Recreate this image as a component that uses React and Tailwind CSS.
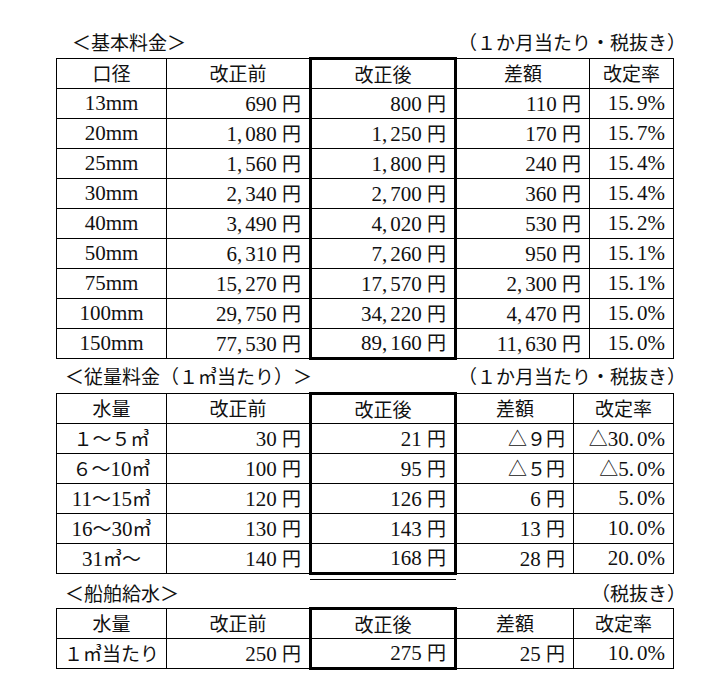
import React from 'react';

const CJK = /[\u2000-\u2bff\u3000-\u9fff\uff00-\uffef]/;

// split a string into CJK and latin runs so each gets its own face and size
function Txt({ s }) {
  const runs = [];
  for (const ch of s) {
    const c = CJK.test(ch);
    const last = runs[runs.length - 1];
    if (last && last.c === c) last.t += ch;
    else runs.push({ c, t: ch });
  }
  return runs.map((r, i) =>
    r.c ? (
      <span key={i} className="font-['Noto_Sans_CJK_JP',sans-serif] text-[19px]">
        {r.t}
      </span>
    ) : (
      <span key={i} className="text-[21px]">
        {r.t.split(/([,.])/).map((p, j) =>
          p === ',' || p === '.' ? (
            <span key={j} className="mr-[3px]">{p}</span>
          ) : (
            p
          )
        )}
      </span>
    )
  );
}

const HEAD1 = ['口径', '改正前', '改正後', '差額', '改定率'];
const HEAD2 = ['水量', '改正前', '改正後', '差額', '改定率'];

const COLS1 = ['w-[110px]', 'w-[144px]', 'w-[145px]', 'w-[134px]', 'w-[84px]'];
const COLS2 = ['w-[110px]', 'w-[144px]', 'w-[145px]', 'w-[118px]', 'w-[100px]'];

const basic = [
  ['13mm', '690 円', '800 円', '110 円', '15.9%'],
  ['20mm', '1,080 円', '1,250 円', '170 円', '15.7%'],
  ['25mm', '1,560 円', '1,800 円', '240 円', '15.4%'],
  ['30mm', '2,340 円', '2,700 円', '360 円', '15.4%'],
  ['40mm', '3,490 円', '4,020 円', '530 円', '15.2%'],
  ['50mm', '6,310 円', '7,260 円', '950 円', '15.1%'],
  ['75mm', '15,270 円', '17,570 円', '2,300 円', '15.1%'],
  ['100mm', '29,750 円', '34,220 円', '4,470 円', '15.0%'],
  ['150mm', '77,530 円', '89,160 円', '11,630 円', '15.0%'],
];

const volume = [
  ['１～５㎥', '30 円', '21 円', '△９円', '△30.0%'],
  ['６～10㎥', '100 円', '95 円', '△５円', '△5.0%'],
  ['11～15㎥', '120 円', '126 円', '6 円', '5.0%'],
  ['16～30㎥', '130 円', '143 円', '13 円', '10.0%'],
  ['31㎥～', '140 円', '168 円', '28 円', '20.0%'],
];

const ship = [['１㎥当たり', '250 円', '275 円', '25 円', '10.0%']];

function RateTable({ cols, head, rows }) {
  const all = [head, ...rows];
  return (
    <table className="table-fixed border-collapse w-[617px]">
      <colgroup>
        {cols.map((c, i) => (
          <col key={i} className={c} />
        ))}
      </colgroup>
      <tbody>
        {all.map((row, r) => (
          <tr key={r} className="h-[30px]">
            {row.map((cell, c) => {
              let cls = 'p-0 border border-black leading-none whitespace-nowrap';
              if (c === 2) {
                cls += ' border-x-[3px]';
                if (r === 0) cls += ' border-t-[3px]';
                if (r === all.length - 1) cls += ' border-b-[3px]';
              }
              cls += r === 0 || c === 0 ? ' text-center' : ' text-right pr-[8px]';
              return (
                <td key={c} className={cls}>
                  <Txt s={cell} />
                </td>
              );
            })}
          </tr>
        ))}
      </tbody>
    </table>
  );
}

function Title({ left, right, indent, h }) {
  return (
    <div className={`flex items-center justify-between w-[630px] ${h}`}>
      <div className={indent}>
        <Txt s={left} />
      </div>
      <div>
        <Txt s={right} />
      </div>
    </div>
  );
}

export default function App() {
  return (
    <div className="w-[710px] h-[683px] bg-white text-[#111] font-['Liberation_Serif','Noto_Sans_CJK_JP',serif] pt-[28px] pl-[56px] leading-none">
      <Title left="＜基本料金＞" right="（１か月当たり・税抜き）" indent="ml-[16px]" h="h-[29px]" />
      <RateTable cols={COLS1} head={HEAD1} rows={basic} />

      <Title left="＜従量料金（１㎥当たり）＞" right="（１か月当たり・税抜き）" indent="ml-[9px]" h="h-[32px]" />
      <RateTable cols={COLS2} head={HEAD2} rows={volume} />

      <div className="ml-[254px] mt-[4px] w-[146px] h-px bg-black" />
      <Title left="＜船舶給水＞" right="（税抜き）" indent="ml-[9px]" h="h-[27px]" />
      <RateTable cols={COLS2} head={HEAD2} rows={ship} />
    </div>
  );
}
